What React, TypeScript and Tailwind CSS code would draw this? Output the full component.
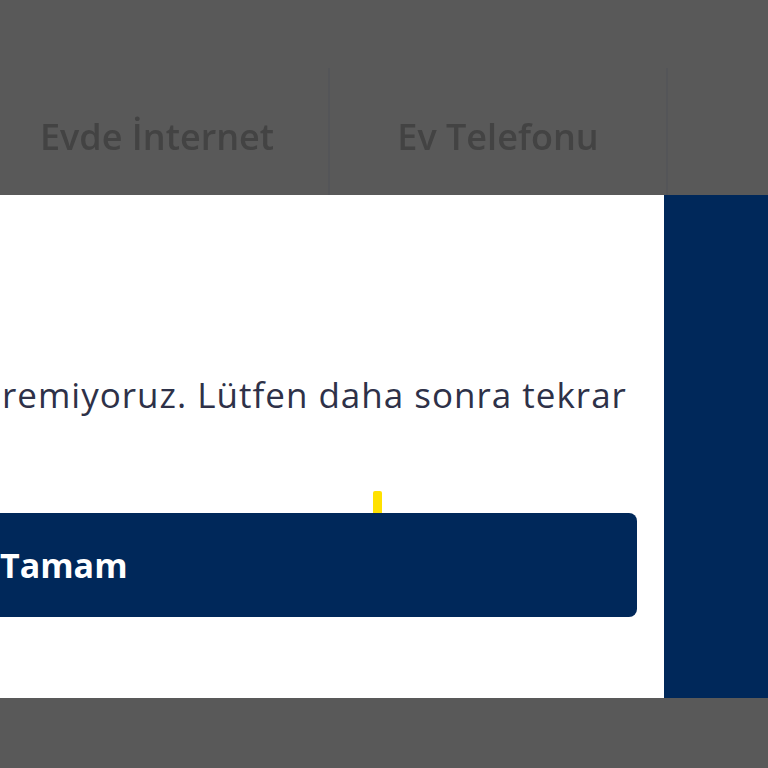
import React from "react"

const App = () => {
  return (
    <div className="w-[768px] h-[768px] overflow-hidden bg-[#595959] flex flex-col font-['Open_Sans',sans-serif]">
      {/* tab strip behind overlay */}
      <div className="h-[68px]" />
      <div className="h-[127px] flex text-[#434343] text-[36px] font-semibold tracking-[0px]">
        <div className="w-[328px] flex items-center justify-center pt-[10px] pr-[14px] blur-[0.7px]">Evde İnternet</div>
        <div className="w-[340px] border-l-2 border-r-2 border-[#545558] flex items-center justify-center pt-[10px] blur-[0.7px]">
          Ev Telefonu
        </div>
        <div className="flex-1" />
      </div>

      {/* modal row */}
      <div className="h-[503px] flex">
        <div className="w-[664px] bg-white flex flex-col relative">
          <p className="mt-[178px] pl-[2px] text-[35px] leading-[44px] tracking-[1px] text-[#2e3148] whitespace-nowrap">
            remiyoruz. Lütfen daha sonra tekrar
          </p>
          <div className="absolute left-[373px] top-[296px] w-[9px] h-[22px] bg-[#ffe100] rounded-t-[2px]" />
          <button className="mt-[96px] w-[637px] h-[104px] bg-[#00285a] rounded-r-[8px] text-left text-white font-bold text-[34px] flex items-center">
            Tamam
          </button>
        </div>
        <div className="flex-1 bg-[#00285a]" />
      </div>
      <div className="flex-1" />
    </div>
  )
}

export default App
